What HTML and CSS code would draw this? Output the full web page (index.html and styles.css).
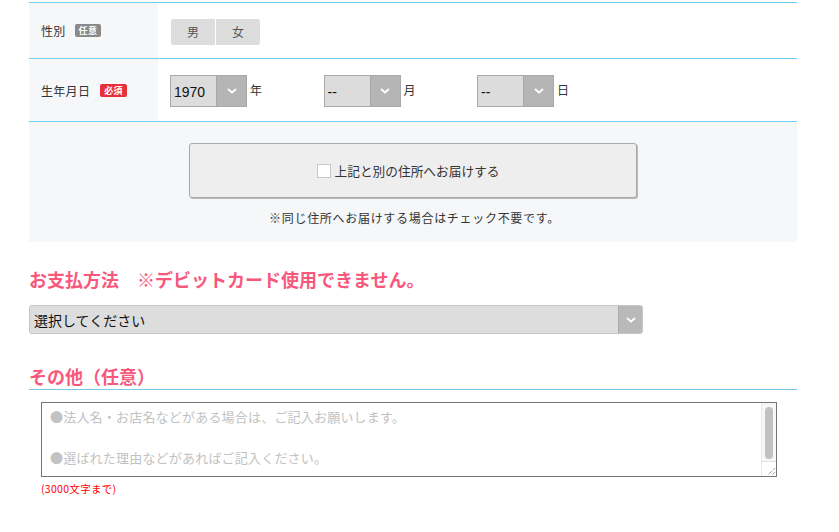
FILE: index.html
```html
<!DOCTYPE html>
<html lang="ja">
<head>
<meta charset="utf-8">
<title>フォーム</title>
<link rel="stylesheet" href="styles.css">
</head>
<body>
<div class="form">
  <div class="row row-gender">
    <div class="label">性別 <span class="badge badge-opt">任意</span></div>
    <div class="value">
      <div class="seg">
        <span class="seg-btn">男</span>
        <span class="seg-btn">女</span>
      </div>
    </div>
  </div>
  <div class="row row-birth">
    <div class="label">生年月日 <span class="badge badge-req">必須</span></div>
    <div class="value birth">
      <div class="date-group">
        <div class="sel"><span class="sel-val">1970</span><span class="sel-arrow"><svg width="10" height="6" viewBox="0 0 10 6"><path d="M1 1l4 3.5L9 1" fill="none" stroke="#fff" stroke-width="1.8"/></svg></span></div>
        <span class="unit">年</span>
      </div>
      <div class="date-group">
        <div class="sel"><span class="sel-val">--</span><span class="sel-arrow"><svg width="10" height="6" viewBox="0 0 10 6"><path d="M1 1l4 3.5L9 1" fill="none" stroke="#fff" stroke-width="1.8"/></svg></span></div>
        <span class="unit">月</span>
      </div>
      <div class="date-group">
        <div class="sel"><span class="sel-val">--</span><span class="sel-arrow"><svg width="10" height="6" viewBox="0 0 10 6"><path d="M1 1l4 3.5L9 1" fill="none" stroke="#fff" stroke-width="1.8"/></svg></span></div>
        <span class="unit">日</span>
      </div>
    </div>
  </div>
  <div class="ship">
    <label class="ship-btn"><span class="check"></span>上記と別の住所へお届けする</label>
    <p class="ship-note">※同じ住所へお届けする場合はチェック不要です。</p>
  </div>

  <h2 class="heading">お支払方法　※デビットカード使用できません。</h2>
  <div class="pay-sel">
    <span class="pay-val">選択してください</span>
    <span class="pay-arrow"><svg width="10" height="6" viewBox="0 0 10 6"><path d="M1 1l4 3.5L9 1" fill="none" stroke="#fff" stroke-width="1.8"/></svg></span>
  </div>

  <h2 class="heading heading-line">その他（任意）</h2>
  <div class="memo-wrap">
    <textarea class="memo" placeholder="●法人名・お店名などがある場合は、ご記入お願いします。&#10;&#10;●選ばれた理由などがあればご記入ください。"></textarea>
    <div class="vscroll">
      <div class="vscroll-track"><div class="vscroll-thumb"></div></div>
      <div class="vscroll-corner"><svg width="10" height="10" viewBox="0 0 10 10"><path d="M9 2L2 9M9 6L6 9" stroke="#666" stroke-width="0.9" stroke-dasharray="1 1"/></svg></div>
    </div>
  </div>
  <p class="limit">(3000文字まで)</p>
</div>
</body>
</html>
```

FILE: styles.css
```css
* { box-sizing: border-box; }
body {
  margin: 0;
  padding-top: 2px;
  background: #fff;
  font-family: "Noto Sans CJK JP", "Noto Sans", sans-serif;
  color: #333;
}
.form {
  margin-left: 29px;
  width: 768px;
}
.row {
  display: grid;
  grid-template-columns: 129px 1fr;
  border-top: 1px solid #6fcff5;
}
.row-gender { height: 56px; }
.row-birth { height: 64px; border-bottom: 1px solid #6fcff5; }
.label {
  background: #f6f7f9;
  display: flex;
  align-items: center;
  padding-left: 12px;
  font-size: 12px;
  letter-spacing: 0.3px;
  color: #333;
  gap: 9px;
}
.badge {
  display: inline-block;
  font-size: 9px;
  line-height: 13px;
  height: 13px;
  padding: 0 4px;
  border-radius: 2px;
  color: #fff;
  font-weight: bold;
  letter-spacing: 0.3px;
}
.badge-opt { background: #8a8a8a; }
.badge-req { background: #e8303a; margin-left: 1px; }
.value {
  display: flex;
  align-items: center;
  padding-left: 13px;
}
.row-gender .value { padding-top: 2px; }
.seg {
  display: flex;
  gap: 1px;
}
.seg-btn {
  width: 44px;
  height: 26px;
  background: #dddddd;
  color: #555;
  font-size: 12px;
  display: flex;
  align-items: center;
  justify-content: center;
}
.seg-btn:first-child { border-radius: 2px 0 0 2px; }
.seg-btn:last-child { border-radius: 0 2px 2px 0; }
.birth { padding-left: 12px; padding-top: 1px; }
.date-group {
  width: 153.5px;
  display: flex;
  align-items: center;
}
.sel {
  display: flex;
  width: 77px;
  height: 32px;
  border: 1px solid #a9a9a9;
}
.sel-val {
  flex: 1;
  background: #dcdcdc;
  font-family: "Liberation Sans", Arial, sans-serif;
  font-size: 14px;
  color: #111;
  display: flex;
  align-items: center;
  padding-left: 3px;
  padding-top: 2px;
}
.sel-arrow {
  width: 30px;
  background: #b5b5b5;
  border-left: 1px solid #a7a7a7;
  display: flex;
  align-items: center;
  justify-content: center;
}
.unit {
  font-size: 12px;
  color: #333;
  margin-left: 3px;
  margin-top: -3px;
}
.ship {
  background: #f6f7f9;
  height: 120px;
  padding-top: 21px;
  display: flex;
  flex-direction: column;
  align-items: center;
}
.ship-btn {
  width: 448px;
  height: 55px;
  border: 1px solid #a9a9a9;
  border-radius: 3px;
  background: #eeeeee;
  box-shadow: 1px 1px 0 #b9b9b9;
  display: flex;
  align-items: center;
  justify-content: center;
  font-size: 12.7px;
  color: #333;
  padding-right: 10px;
}
.check {
  width: 14px;
  height: 14px;
  border: 1px solid #c8c8c8;
  background: #fff;
  margin-right: 4px;
}
.ship-note {
  margin: 11px 0 0;
  font-size: 12px;
  letter-spacing: 0.7px;
  color: #333;
  padding-left: 3px;
}
.heading {
  margin: 0;
  font-size: 18px;
  font-weight: bold;
  color: #f8587c;
  line-height: 26px;
}
.ship + .heading { margin-top: 24px; }
.pay-sel {
  margin-top: 13px;
  width: 614px;
  height: 29px;
  display: flex;
  border: 1px solid #c6c6c6;
  border-radius: 3px;
  background: #dddddd;
  overflow: hidden;
}
.pay-val {
  flex: 1;
  font-size: 14px;
  color: #111;
  display: flex;
  align-items: center;
  padding-left: 4px;
}
.pay-arrow {
  width: 24px;
  background: #b9b9b9;
  border-left: 1px solid #aaa;
  display: flex;
  align-items: center;
  justify-content: center;
}
.heading-line {
  margin-top: 30px;
  line-height: 25px;
  border-bottom: 1px solid #7cc8e8;
}
.memo-wrap {
  position: relative;
  margin: 12px 0 0 12px;
  width: 736px;
  height: 75px;
}
.memo {
  display: block;
  width: 100%;
  height: 100%;
  border: 1px solid #767676;
  padding: 4px 24px 4px 8px;
  font-family: "Noto Sans CJK JP", sans-serif;
  font-size: 13px;
  letter-spacing: 0.2px;
  line-height: 20.5px;
  overflow: hidden;
  resize: none;
}
.memo::placeholder { color: #c2c2c2; }
.vscroll {
  position: absolute;
  top: 1px;
  right: 1px;
  bottom: 1px;
  width: 15px;
  background: #f7f7f7;
  border-left: 1px solid #e8e8e8;
  display: flex;
  flex-direction: column;
}
.vscroll-track {
  flex: 1;
  padding: 4px 3px 2px 3px;
}
.vscroll-thumb {
  height: 52px;
  background: #c1c1c1;
  border-radius: 4px;
}
.vscroll-corner {
  height: 15px;
  border-top: 1px solid #e2e2e2;
  background: #fff;
  display: flex;
  align-items: flex-end;
  justify-content: flex-end;
}
.limit {
  margin: 4px 0 0 12px;
  font-size: 10.5px;
  letter-spacing: 0.3px;
  color: #f00;
}
```
